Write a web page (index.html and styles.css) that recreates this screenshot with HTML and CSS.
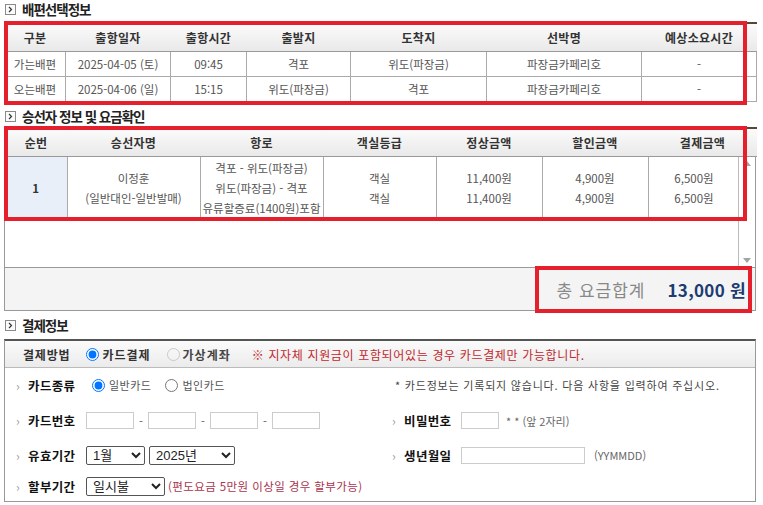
FILE: index.html
```html
<!DOCTYPE html>
<html lang="ko">
<head>
  <meta charset="UTF-8">
  <title>예매확인</title>
  <link rel="stylesheet" href="styles.css">
</head>
<body>

  <!-- 배편선택정보 -->
  <div class="sec-title first">
    <svg class="ico" width="11" height="11" viewBox="0 0 11 11"><rect x="0.5" y="0.5" width="10" height="10" fill="#fafafa" stroke="#8a8a8a"/><polyline points="4,3 6.5,5.5 4,8" fill="none" stroke="#333" stroke-width="1.2"/></svg>
    <span>배편선택정보</span>
  </div>
  <div class="box">
    <table class="grid trip">
      <colgroup>
        <col style="width:61px"><col style="width:105px"><col style="width:76px"><col style="width:104px">
        <col style="width:136px"><col style="width:155px"><col style="width:115px">
      </colgroup>
      <tr>
        <th>구분</th><th>출항일자</th><th>출항시간</th><th>출발지</th><th>도착지</th><th>선박명</th><th>예상소요시간</th>
      </tr>
      <tr>
        <td>가는배편</td><td>2025-04-05 (토)</td><td>09:45</td><td>격포</td><td>위도(파장금)</td><td>파장금카페리호</td><td>-</td>
      </tr>
      <tr>
        <td>오는배편</td><td>2025-04-06 (일)</td><td>15:15</td><td>위도(파장금)</td><td>격포</td><td>파장금카페리호</td><td>-</td>
      </tr>
    </table>
  </div>

  <!-- 승선자 정보 -->
  <div class="sec-title">
    <svg class="ico" width="11" height="11" viewBox="0 0 11 11"><rect x="0.5" y="0.5" width="10" height="10" fill="#fafafa" stroke="#8a8a8a"/><polyline points="4,3 6.5,5.5 4,8" fill="none" stroke="#333" stroke-width="1.2"/></svg>
    <span>승선자 정보 및 요금확인</span>
  </div>
  <div class="box pass">
    <table class="grid pass-head">
      <colgroup>
        <col style="width:62px"><col style="width:133px"><col style="width:123px"><col style="width:113px">
        <col style="width:106px"><col style="width:106px"><col style="width:109px">
      </colgroup>
      <tr>
        <th>순번</th><th>승선자명</th><th>항로</th><th>객실등급</th><th>정상금액</th><th>할인금액</th><th>결제금액</th>
      </tr>
    </table>
    <div class="scroll">
      <div class="scroll-body">
        <table class="grid pass-body">
          <colgroup>
            <col style="width:62px"><col style="width:133px"><col style="width:123px"><col style="width:113px">
            <col style="width:106px"><col style="width:106px"><col style="width:92px">
          </colgroup>
          <tr>
            <td class="no">1</td>
            <td>이정훈<br>(일반대인-일반발매)</td>
            <td>격포 - 위도(파장금)<br>위도(파장금) - 격포<br>유류할증료(1400원)포함</td>
            <td>객실<br>객실</td>
            <td>11,400원<br>11,400원</td>
            <td>4,900원<br>4,900원</td>
            <td>6,500원<br>6,500원</td>
          </tr>
        </table>
      </div>
      <div class="sbar">
        <span class="arr up"></span>
        <span class="arr down"></span>
      </div>
    </div>
    <div class="total">
      <span class="total-label">총 요금합계</span>
      <span class="total-sum">13,000 원</span>
    </div>
  </div>

  <!-- 결제정보 -->
  <div class="sec-title">
    <svg class="ico" width="11" height="11" viewBox="0 0 11 11"><rect x="0.5" y="0.5" width="10" height="10" fill="#fafafa" stroke="#8a8a8a"/><polyline points="4,3 6.5,5.5 4,8" fill="none" stroke="#333" stroke-width="1.2"/></svg>
    <span>결제정보</span>
  </div>
  <div class="box pay">
    <div class="method">
      <span class="method-label">결제방법</span>
      <label class="opt"><input type="radio" name="method" checked>카드결제</label>
      <label class="opt off"><input type="radio" name="method" disabled>가상계좌</label>
      <span class="notice">※ 지자체 지원금이 포함되어있는 경우 카드결제만 가능합니다.</span>
    </div>
    <div class="form">
      <div class="row">
        <span class="lbl">카드종류</span>
        <label class="small"><input type="radio" name="ctype" checked>일반카드</label>
        <label class="small"><input type="radio" name="ctype">법인카드</label>
      </div>
      <div class="row right">
        <span class="hint">* 카드정보는 기록되지 않습니다. 다음 사항을 입력하여 주십시오.</span>
      </div>

      <div class="row">
        <span class="lbl">카드번호</span>
        <input class="txt num" type="text"><span class="dash">-</span>
        <input class="txt num" type="text"><span class="dash">-</span>
        <input class="txt num" type="text"><span class="dash">-</span>
        <input class="txt num" type="text">
      </div>
      <div class="row right">
        <span class="lbl">비밀번호</span>
        <input class="txt pw" type="password">
        <span class="note">* * (앞 2자리)</span>
      </div>

      <div class="row">
        <span class="lbl">유효기간</span>
        <select class="sel month"><option>1월</option></select>
        <select class="sel year"><option>2025년</option></select>
      </div>
      <div class="row right">
        <span class="lbl">생년월일</span>
        <input class="txt birth" type="text">
        <span class="note">(YYMMDD)</span>
      </div>

      <div class="row wide">
        <span class="lbl">할부기간</span>
        <select class="sel inst"><option>일시불</option></select>
        <span class="red-note">(편도요금 5만원 이상일 경우 할부가능)</span>
      </div>
    </div>
  </div>

  <!-- 빨간 표시 -->
  <div class="mark m1"></div>
  <div class="mark m2"></div>
  <div class="mark m3"></div>

</body>
</html>
```

FILE: styles.css
```css
body {
  margin: 0;
  width: 763px;
  font-family: "Noto Sans CJK KR", "Noto Sans", sans-serif;
  color: #555;
  background: #fff;
  position: relative;
}
.sec-title {
  display: flex;
  align-items: center;
  gap: 6px;
  height: 20px;
  margin-top: 4px;
  padding-left: 5px;
  font-size: 13.5px;
  font-weight: bold;
  color: #222;
  letter-spacing: -1px;
}
.sec-title.first {
  margin-top: -1px;
}
.box {
  margin-left: 4px;
  width: 752px;
  box-sizing: border-box;
}
.trip {
  margin-top: 3px;
}
.grid {
  border-collapse: collapse;
  table-layout: fixed;
  width: 752px;
  font-size: 11.5px;
  text-align: center;
}
.grid th {
  height: 27px;
  padding: 0;
  font-size: 12px;
  color: #333;
  letter-spacing: 0.3px;
  background: linear-gradient(#fbfbfb, #e9e9e9);
  border-top: 2px solid #5b4636;
  border-bottom: 1px solid #999;
}
.grid td {
  height: 24px;
  padding: 0;
  border: 1px solid #aaa;
  color: #555;
  line-height: 18px;
}
.pass {
  margin-top: 1px;
  border-left: 1px solid #999;
  border-right: 1px solid #999;
  border-bottom: 1px solid #999;
}
.pass-head {
  width: 750px;
}
.pass-body {
  width: 733px;
}
.scroll {
  display: flex;
  height: 110px;
  border-bottom: 1px solid #999;
}
.scroll-body {
  width: 733px;
  overflow: hidden;
}
.pass-body td {
  height: 62px;
  line-height: 20px;
  border-top: none;
  vertical-align: middle;
}
.pass-body td:first-child {
  border-left: none;
}
.pass-body .no {
  background: #e8eff9;
  color: #333;
  font-weight: bold;
}
.sbar {
  width: 17px;
  border-left: 1px solid #bbb;
  display: flex;
  flex-direction: column;
  justify-content: space-between;
  align-items: center;
  padding: 4px 0;
  box-sizing: border-box;
}
.arr {
  width: 0;
  height: 0;
  border-left: 4px solid transparent;
  border-right: 4px solid transparent;
}
.arr.up {
  border-bottom: 5px solid #a3a3a3;
}
.arr.down {
  border-top: 5px solid #a3a3a3;
}
.total {
  height: 42px;
  background: #f4f4f4;
  display: flex;
  align-items: center;
  justify-content: flex-end;
  padding-right: 9px;
  gap: 22px;
  font-size: 17px;
}
.total-label {
  color: #888;
  letter-spacing: 1px;
}
.total-sum {
  color: #1c3c72;
  font-weight: bold;
  letter-spacing: 0.3px;
}
.pay {
  margin-top: 4px;
  border-top: 2px solid #555;
  border-left: 1px solid #999;
  border-right: 1px solid #999;
  border-bottom: 1px solid #999;
}
.method {
  height: 26px;
  display: flex;
  align-items: center;
  padding-left: 18px;
  background: linear-gradient(#fbfbfb, #ebebeb);
  border-bottom: 1px solid #bbb;
  font-size: 12px;
}
.method-label {
  font-weight: bold;
  color: #333;
  letter-spacing: 0.8px;
  margin-right: 16px;
}
.opt {
  display: flex;
  align-items: center;
  font-weight: bold;
  color: #333;
  margin-right: 16px;
  letter-spacing: 1px;
}
.opt input {
  margin: 0 3px 0 0;
  width: 13px;
  height: 13px;
}
.opt.off {
  color: #444;
}
.notice {
  color: #c1272d;
  font-size: 12px;
  margin-left: 5px;
  letter-spacing: 0.65px;
}
.form {
  display: grid;
  grid-template-columns: 376px 1fr;
  grid-template-rows: 34px 37px 32px 30px;
}
.row {
  display: flex;
  align-items: center;
  padding-left: 11px;
  font-size: 11px;
}
.row.wide {
  grid-column: 1 / 3;
}
.lbl {
  font-size: 12.5px;
  font-weight: bold;
  color: #111;
  width: 70px;
  flex: none;
  letter-spacing: 0.3px;
}
.row.right .lbl {
  width: 69px;
}
.lbl::before {
  content: "›";
  color: #999;
  font-weight: normal;
  margin-right: 8px;
}
.small {
  display: flex;
  align-items: center;
  color: #555;
  margin-right: 6px;
  letter-spacing: 0.5px;
}
.small input {
  margin: 0 4px 0 6px;
  width: 13px;
  height: 13px;
}
.small + .small input {
  margin-left: 8px;
}
.hint {
  color: #444;
  margin-left: 3px;
  letter-spacing: 0.8px;
}
.txt {
  height: 17px;
  border: 1px solid #ccc;
  padding: 0;
  box-sizing: border-box;
}
.num {
  width: 48px;
}
.dash {
  width: 14px;
  text-align: center;
  color: #555;
}
.pw {
  width: 38px;
}
.birth {
  width: 124px;
}
.note {
  margin-left: 7px;
  color: #666;
}
.birth + .note {
  margin-left: 9px;
}
.sel {
  height: 19px;
  font-family: "Liberation Sans", "Noto Sans CJK KR", sans-serif;
  font-size: 13px;
  color: #222;
  border: 1px solid #555;
  border-radius: 2px;
  background: #fff;
  padding: 0 2px;
}
.month {
  width: 59px;
}
.year {
  width: 86px;
  margin-left: 4px;
}
.inst {
  width: 79px;
}
.red-note {
  color: #a8344e;
  margin-left: 3px;
  font-size: 11.5px;
  letter-spacing: 0.4px;
}
.mark {
  position: absolute;
  border: 4px solid #e5202c;
  box-sizing: border-box;
  pointer-events: none;
}
.m1 {
  left: 4px;
  top: 21px;
  width: 743px;
  height: 84px;
}
.m2 {
  left: 4px;
  top: 126px;
  width: 743px;
  height: 95px;
}
.m3 {
  left: 535px;
  top: 266px;
  width: 217px;
  height: 47px;
}
```
